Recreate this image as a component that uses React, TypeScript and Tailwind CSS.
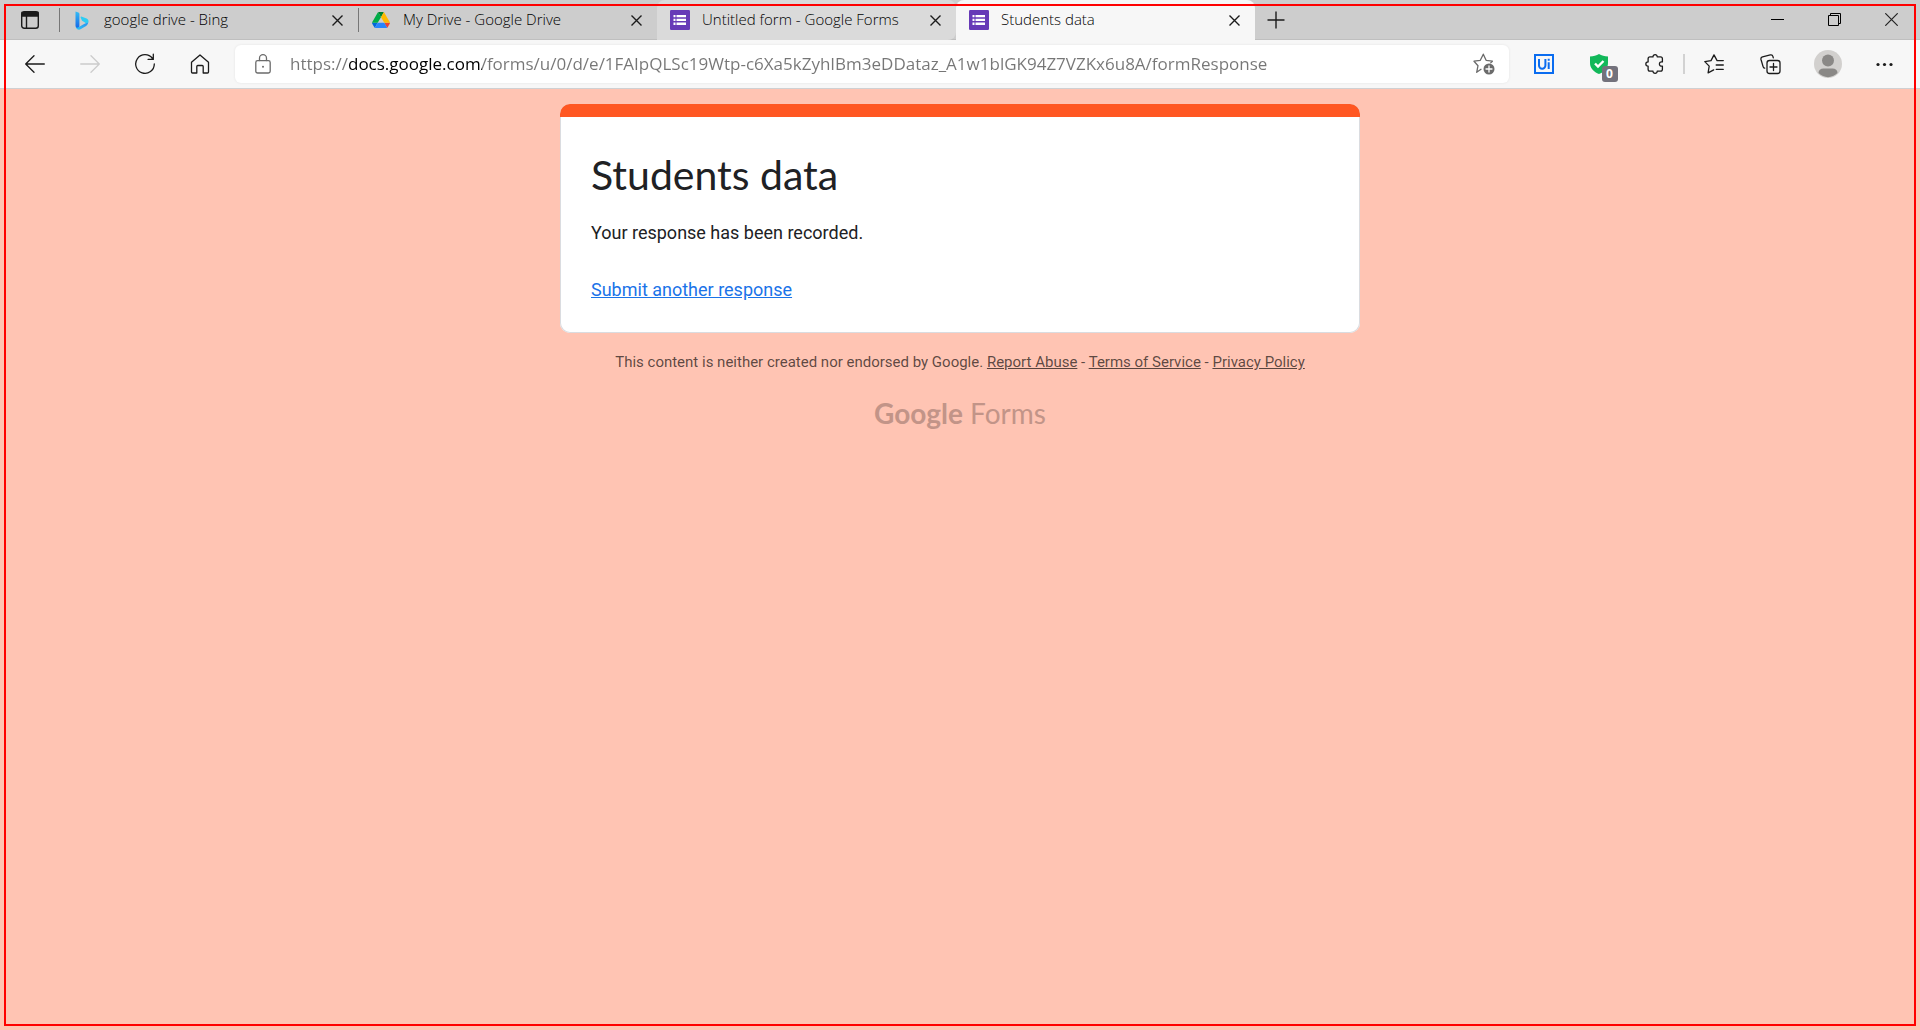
import { useState } from "react";
import type { ReactNode } from "react";

const ADDRESS =
  "https://docs.google.com/forms/u/0/d/e/1FAIpQLSc19Wtp-c6Xa5kZyhIBm3eDDataz_A1w1blGK94Z7VZKx6u8A/formResponse";

function CloseGlyph() {
  return (
    <svg width="11" height="11" viewBox="0 0 11 11" fill="none" stroke="#1b1b1b" strokeWidth="1.4" aria-hidden="true">
      <path d="M.5.5l10 10M10.5.5l-10 10" />
    </svg>
  );
}

function BingIcon() {
  return (
    <svg width="14" height="19" viewBox="0 0 14 19" aria-hidden="true">
      <defs>
        <linearGradient id="bing-stem" x1="0" y1="0" x2="0" y2="1">
          <stop offset="0" stopColor="#34bdf5" />
          <stop offset="1" stopColor="#1668e8" />
        </linearGradient>
        <linearGradient id="bing-bowl" x1="0" y1="1" x2="1" y2="0">
          <stop offset="0" stopColor="#2fc6f5" />
          <stop offset="1" stopColor="#2a8ff0" />
        </linearGradient>
      </defs>
      <path d="M6.300 5.600c-.6-.1-.9.400-.7.900l1.400 3.300 3 1.600c1.200.700 1.200 1.700.4 2.600l2.300-1.400c1.400-1.500 1-4.200-1.100-5.100z" fill="#2ccdf3" />
      <path d="M.6 15.500l3.700.3 4.300-2.600c2-1.200 3.800-.6 4.500-1.600-.2 1.700-.8 2.500-2 3.300L6 18.100c-2.400 1.300-5.100.1-5.400-2.600z" fill="url(#bing-bowl)" />
      <path d="M.5.500l2.900 1.100c.7.300 1 .8 1 1.500v12.300l-1.500 1.200C1.500 17 .5 16 .5 14.600z" fill="url(#bing-stem)" />
    </svg>
  );
}

function DriveIcon() {
  return (
    <svg width="18" height="16" viewBox="0 0 87.300 78" aria-hidden="true">
      <path d="m6.600 66.850 3.850 6.650c.8 1.400 1.950 2.500 3.300 3.300l13.750-23.800h-27.500c0 1.550.4 3.100 1.200 4.500z" fill="#0066da" />
      <path d="m43.650 25-13.750-23.800c-1.350.8-2.500 1.900-3.300 3.300l-25.400 44a9.060 9.060 0 0 0 -1.200 4.500h27.500z" fill="#00ac47" />
      <path d="m73.550 76.800c1.350-.8 2.500-1.900 3.300-3.300l1.600-2.750 7.650-13.250c.8-1.400 1.200-2.950 1.200-4.500h-27.502l5.852 11.500z" fill="#ea4335" />
      <path d="m43.650 25 13.750-23.800c-1.350-.8-2.900-1.200-4.500-1.200h-18.500c-1.600 0-3.150.45-4.500 1.200z" fill="#00832d" />
      <path d="m59.800 53h-32.300l-13.750 23.800c1.350.8 2.900 1.200 4.500 1.200h50.800c1.600 0 3.150-.45 4.500-1.200z" fill="#2684fc" />
      <path d="m73.400 26.500-12.700-22c-.8-1.400-1.950-2.500-3.300-3.300l-13.750 23.800 16.150 28h27.450c0-1.550-.4-3.100-1.200-4.500z" fill="#ffba00" />
    </svg>
  );
}

function FormsIcon() {
  return (
    <svg width="20" height="20" viewBox="0 0 20 20" aria-hidden="true">
      <rect width="20" height="20" rx="1.200" fill="#673ab7" />
      <path d="M3.500 5h2v2.300h-2zM6.500 5H16v2.300H6.500zM3.500 8.800h2v2.300h-2zM6.500 8.800H16v2.300H6.500zM3.500 12.600h2v2.300h-2zM6.500 12.600H16v2.300H6.500z" fill="#fff" />
    </svg>
  );
}

const TABS: { title: string; icon: ReactNode; look: string }[] = [
  { title: "google drive - Bing", icon: <BingIcon />, look: "" },
  { title: "My Drive - Google Drive", icon: <DriveIcon />, look: "" },
  { title: "Untitled form - Google Forms", icon: <FormsIcon />, look: "rounded-t-lg rounded-br-lg bg-[#dadada]" },
  { title: "Students data", icon: <FormsIcon />, look: "rounded-t-lg bg-[#f7f7f7]" },
];

function Tab({ title, icon, look, divided }: { title: string; icon: ReactNode; look: string; divided: boolean }) {
  return (
    <div className={`relative flex h-full w-[299px] min-w-0 items-center pr-[11px] pl-[13px] ${look}`}>
      {divided && <span className="absolute left-0 h-6 w-px bg-[#767676]" />}
      <button type="button" className="flex min-w-0 flex-1 items-center gap-3 text-left">
        <span className="flex w-5 shrink-0 justify-center">{icon}</span>
        <span className="truncate pb-0.5 text-[15px] leading-5 font-light text-black">{title}</span>
      </button>
      <button type="button" aria-label={`Close ${title}`} className="flex size-5 items-center justify-center">
        <CloseGlyph />
      </button>
    </div>
  );
}

function TitleBar() {
  return (
    <header className="flex h-10 items-stretch border-b border-[#bfbfbf] bg-[#cdcdcd]">
      <button type="button" aria-label="Tab actions" className="flex w-[59px] shrink-0 items-center justify-center">
        <svg width="18" height="18" viewBox="0 0 18 18" fill="none" stroke="#1b1b1b" strokeWidth="1.400" aria-hidden="true">
          <rect x=".7" y=".7" width="16.600" height="16.600" rx="2.500" />
          <path d="M1 1.500h16v3.500H1z" fill="#1b1b1b" />
          <path d="M5.500 5v12" />
        </svg>
      </button>
      <nav aria-label="Tabs" className="-mb-px flex min-w-0">
        {TABS.map((t, i) => (
          <Tab key={t.title} {...t} divided={i < 2} />
        ))}
      </nav>
      <button type="button" aria-label="New tab" className="flex w-[42px] items-center justify-center">
        <svg width="18" height="18" viewBox="0 0 18 18" stroke="#1b1b1b" strokeWidth="1.400" aria-hidden="true">
          <path d="M9 .5v17M.5 9h17" />
        </svg>
      </button>
      <div className="ml-auto flex">
        <button type="button" aria-label="Minimize" className="flex w-[57px] items-center justify-center">
          <svg width="13" height="13" viewBox="0 0 13 13" stroke="#000" aria-hidden="true">
            <path d="M0 6.500h13" />
          </svg>
        </button>
        <button type="button" aria-label="Restore" className="flex w-[57px] items-center justify-center">
          <svg width="13" height="13" viewBox="0 0 13 13" fill="none" stroke="#000" aria-hidden="true">
            <path d="M.5 2.500h10v10H.5zM2.500 2.500v-2h10v10h-2" />
          </svg>
        </button>
        <button type="button" aria-label="Close window" className="flex w-[57px] items-center justify-center">
          <svg width="13" height="13" viewBox="0 0 13 13" stroke="#222" strokeWidth="1.200" aria-hidden="true">
            <path d="M.3.3l12.400 12.400M12.700.3L.3 12.700" />
          </svg>
        </button>
      </div>
    </header>
  );
}

function ToolButton({ label, wide, children }: { label: string; wide?: boolean; children: ReactNode }) {
  return (
    <button
      type="button"
      aria-label={label}
      className={`flex h-9 shrink-0 items-center justify-center ${wide ? "w-[57px]" : "w-[55px]"}`}
    >
      {children}
    </button>
  );
}

const line = { fill: "none", stroke: "#1b1b1b", strokeWidth: 1.3, strokeLinecap: "round", strokeLinejoin: "round" } as const;

function Toolbar() {
  const [address, setAddress] = useState(ADDRESS);
  return (
    <div className="flex h-[49px] items-center border-b border-[#cfd0d2] bg-[#f7f7f7] px-[7px]">
      <ToolButton label="Back">
        <svg width="20" height="18" viewBox="0 0 20 18" {...line} aria-hidden="true">
          <path d="M19.300 9H.7M9 .7L.7 9 9 17.300" />
        </svg>
      </ToolButton>
      <ToolButton label="Forward">
        <svg width="20" height="18" viewBox="0 0 20 18" {...line} stroke="#cccccc" aria-hidden="true">
          <path d="M.7 9h18.600M11 .7L19.300 9 11 17.300" />
        </svg>
      </ToolButton>
      <ToolButton label="Refresh">
        <svg width="22" height="22" viewBox="0 0 22 22" {...line} aria-hidden="true">
          <path d="M20.300 11A9.300 9.300 0 1 1 18.500 5.500M19.300 1.200v5.200h-5.200" />
        </svg>
      </ToolButton>
      <ToolButton label="Home">
        <svg width="20" height="20" viewBox="0 0 20 20" {...line} aria-hidden="true">
          <path d="M1.500 8.300L10 .9l8.500 7.400v9.700c0 .7-.4 1-1 1h-4.300v-6.500c0-.6-.4-1-1-1H7.800c-.6 0-1 .4-1 1V19H2.500c-.6 0-1-.3-1-1z" />
        </svg>
      </ToolButton>
      <div className="ml-2 flex h-[38px] min-w-0 flex-1 items-center rounded-md bg-white shadow-[0_0_3px_rgba(0,0,0,0.08)]">
        <button type="button" aria-label="Site information" className="flex w-[55px] justify-center">
          <svg width="16" height="20" viewBox="0 0 16 20" {...line} stroke="#6b6b6b" aria-hidden="true">
            <rect x=".8" y="6.700" width="14.400" height="12.300" rx="1.800" />
            <path d="M4.500 6.500V4.200a3.500 3.500 0 0 1 7 0v2.300" />
            <circle cx="8" cy="12.800" r="1" fill="#6b6b6b" stroke="none" />
          </svg>
        </button>
        <input
          type="text"
          aria-label="Address"
          spellCheck={false}
          value={address}
          onChange={(e) => setAddress(e.target.value)}
          className="min-w-0 flex-1 bg-[linear-gradient(90deg,#767676_58px,#000_58px,#000_192px,#767676_192px)] bg-clip-text text-[17px] leading-6 text-[#767676] outline-none [-webkit-text-fill-color:transparent]"
        />
        <button type="button" aria-label="Add to favorites" className="flex w-[50px] justify-center">
          <svg width="22" height="22" viewBox="0 0 22 22" {...line} stroke="#6b6b6b" aria-hidden="true">
            <path d="M8 16.300l-4.300 3 1.300-6.600L1 8.200l6.300-.9L10.300 1.200l2.800 6.100 6.300.9-1.700 1.700" />
            <circle cx="16" cy="16" r="5.500" fill="#6b6b6b" stroke="none" />
            <path d="M16 13v6M13 16h6" stroke="#fff" />
          </svg>
        </button>
      </div>
      <div className="flex shrink-0 items-center pl-[7px]">
        <ToolButton label="UI extension">
          <svg width="20" height="20" viewBox="0 0 20 20" fill="none" stroke="#0a6cf0" strokeWidth="2" aria-hidden="true">
            <path d="M1 1h18v18H1z" />
            <path d="M5 5v6.500a3.200 3.200 0 0 0 6.400 0V5M14.700 8.200V15M14.700 4.700v2" />
          </svg>
        </ToolButton>
        <ToolButton label="Protection, 0 blocked">
          <span className="relative">
            <svg width="18" height="20" viewBox="0 0 18 20" aria-hidden="true">
              <path d="M0 2.500C3.500 2.500 6.500 1.500 9 0c2.500 1.500 5.500 2.500 9 2.500V9c0 5.500-4 9-9 11-5-2-9-5.500-9-11z" fill="#12b85a" />
              <path d="M5 9.500l3 3L13.500 7" fill="none" stroke="#fff" strokeWidth="2.400" />
            </svg>
            <span className="absolute top-3 left-3 flex size-4 items-center justify-center rounded-[3px] bg-[#73727c] text-[12px] leading-4 font-bold text-white">
              0
            </span>
          </span>
        </ToolButton>
        <ToolButton label="Extensions" wide>
          <svg width="20" height="20" viewBox="0 0 20 20" {...line} aria-hidden="true">
            <path d="M5 2.900h3c-.2-3 4.400-3 4.200 0h3.300c1.200 0 1.900.7 1.900 1.900v3.100c-4-.8-4 5 0 4.200v3.100c0 1.200-.7 1.900-1.900 1.900h-3.300c.2 3-4.400 3-4.200 0H5c-1.200 0-1.900-.7-1.900-1.900v-3c-3-.1-3-4.300 0-4.300V4.800c0-1.200.7-1.900 1.900-1.900z" />
          </svg>
        </ToolButton>
        <span className="h-5 w-[2px] bg-[#d2d2d2]" />
        <ToolButton label="Favorites" wide>
          <svg width="20" height="20" viewBox="0 0 20 20" {...line} aria-hidden="true">
            <path d="M19.300 6.600h-6.200L10 .9 7 6.600l-6.200 1 4.400 4.500-1.100 6.700 5.600-2.900M12.200 11h7.100M12.200 15.300h7.100" />
          </svg>
        </ToolButton>
        <ToolButton label="Collections" wide>
          <svg width="21" height="21" viewBox="0 0 21 21" {...line} aria-hidden="true">
            <rect x="7" y="6.500" width="13" height="13" rx="2.500" />
            <path d="M13.500 9.500v7M10 13h7M4.700 14.200c-.9-.2-1.400-.8-1.600-1.600L1 5.500c-.3-1.300.3-2.300 1.500-2.600L10.300.9c1.300-.3 2.300.3 2.600 1.500l.4 1.500" />
          </svg>
        </ToolButton>
        <ToolButton label="Profile" wide>
          <svg width="28" height="28" viewBox="0 0 28 28" aria-hidden="true">
            <circle cx="14" cy="14" r="14" fill="#d2d0ce" />
            <circle cx="14" cy="10.500" r="6" fill="#8a8886" />
            <path d="M4.500 23c0-3 2-4.600 5-4.600h9c3 0 5 1.600 5 4.600-5.500 5.500-13.500 5.500-19 0z" fill="#8a8886" />
          </svg>
        </ToolButton>
        <ToolButton label="Settings and more" wide>
          <svg width="17" height="5" viewBox="0 0 17 5" fill="#1b1b1b" aria-hidden="true">
            <circle cx="2" cy="2.500" r="1.600" />
            <circle cx="8.500" cy="2.500" r="1.600" />
            <circle cx="15" cy="2.500" r="1.600" />
          </svg>
        </ToolButton>
      </div>
    </div>
  );
}

function FormPage() {
  return (
    <main className="flex flex-1 flex-col items-center bg-[#ffc4b3] px-4 pt-[15px] font-['Roboto',sans-serif]">
      <section className="w-full max-w-[800px] overflow-hidden rounded-[10px] bg-white shadow-[inset_0_0_0_1px_#dadce0]">
        <div className="h-[13px] bg-[#ff5722]" />
        <div className="px-[31px] pt-8 pb-[31px]">
          <h1 className="font-['Lato',sans-serif] text-[41px] leading-[52px] text-[#202124]">Students data</h1>
          <p className="mt-5 text-[18px] leading-6 text-[#202124]">Your response has been recorded.</p>
          <p className="mt-[33px] text-[18px] leading-6">
            <a href="#again" className="text-[#1a73e8] underline">
              Submit another response
            </a>
          </p>
        </div>
      </section>
      <p className="mt-[19px] text-[15px] leading-5 text-black/65">
        This content is neither created nor endorsed by Google.{" "}
        <a href="#abuse" className="underline">Report Abuse</a> -{" "}
        <a href="#terms" className="underline">Terms of Service</a> -{" "}
        <a href="#privacy" className="underline">Privacy Policy</a>
      </p>
      <a href="#forms" className="mt-[21px] font-['Lato',sans-serif] text-[28px] leading-10 text-[#c29488]">
        <span className="font-bold">Google</span> Forms
      </a>
    </main>
  );
}

export default function App() {
  return (
    <div className="relative flex min-h-screen flex-col font-['Open_Sans',sans-serif]">
      <TitleBar />
      <Toolbar />
      <FormPage />
      <div className="pointer-events-none absolute inset-1 border-2 border-[#ff0000]" />
    </div>
  );
}
